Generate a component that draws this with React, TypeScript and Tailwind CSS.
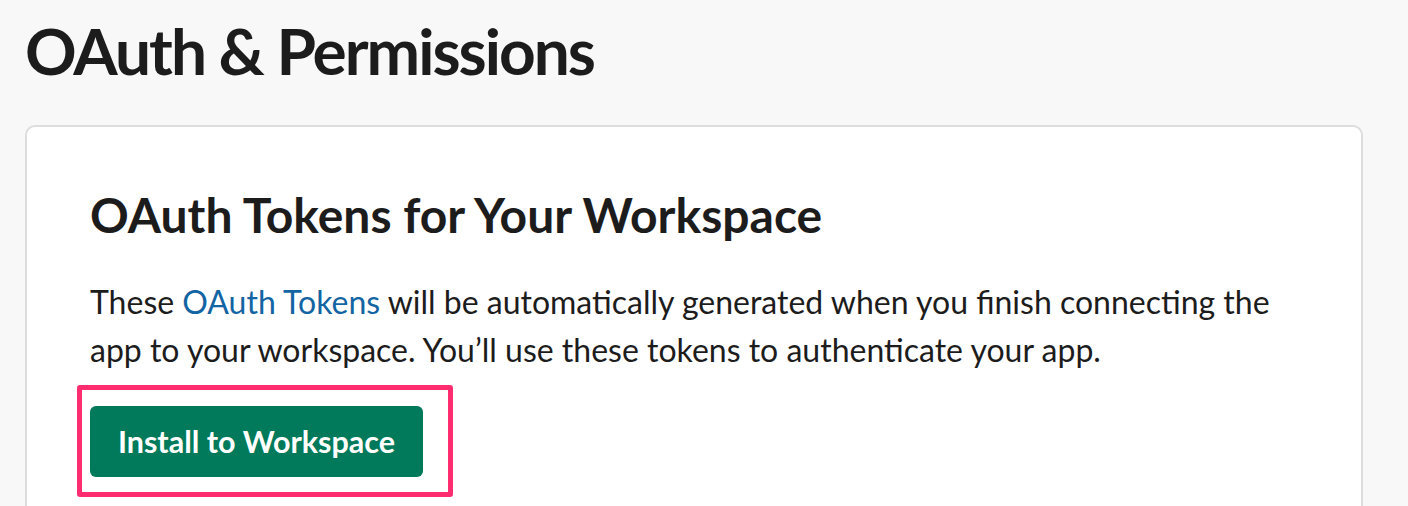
export default function App() {
  return (
    <div className="h-[506px] overflow-hidden bg-[#f8f8f8] pl-[25px] pt-[19px] font-['Lato','Liberation_Sans',sans-serif] text-[#1d1c1d]">
      <h1 className="text-[64px] font-bold leading-none tracking-[-2px]">OAuth &amp; Permissions</h1>

      <div className="mt-[42px] mr-[45px] h-[500px] rounded-[10px] border-2 border-[#dddddd] bg-white pl-[63px] pt-[64px]">
        <h2 className="text-[48px] font-bold leading-none">OAuth Tokens for Your Workspace</h2>

        <p className="mt-[39px] max-w-[1200px] text-[32px] leading-[48px]">
          These <a className="text-[#1264a3]">OAuth Tokens</a> will be automatically generated when you finish
          connecting the app to your workspace. You’ll use these tokens to authenticate your app.
        </p>

        <div className="mt-[11px] -ml-[13px] flex w-fit rounded-[3px] border-[5px] border-[#ff2d6f] pb-[15px] pl-[8px] pr-[25px] pt-[16px]">
          <button className="h-[71px] w-[333px] rounded-[6px] bg-[#007a5a] text-[30.5px] font-bold text-white">
            Install to Workspace
          </button>
        </div>
      </div>
    </div>
  );
}
